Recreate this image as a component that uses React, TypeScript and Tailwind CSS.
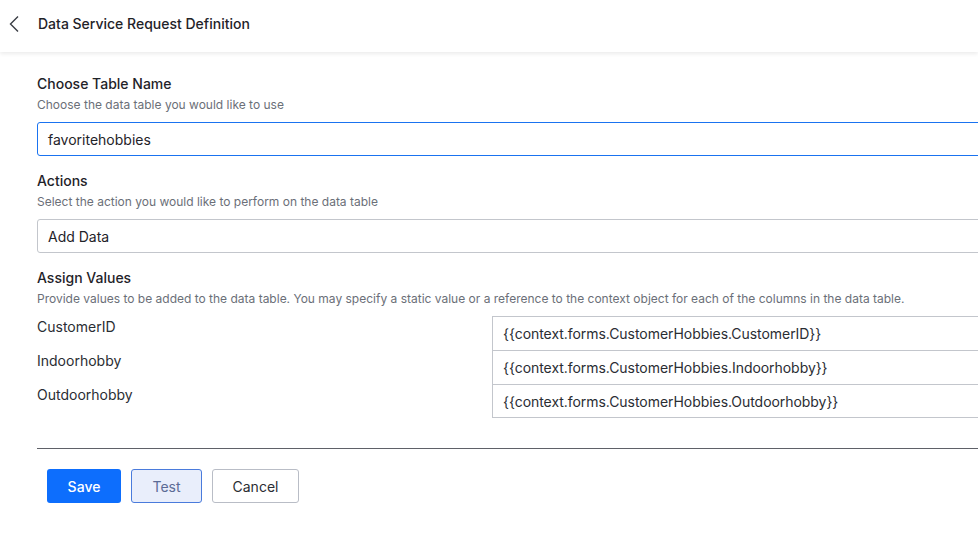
import React from "react";

const rows = [
  { label: "CustomerID", value: "{{context.forms.CustomerHobbies.CustomerID}}" },
  { label: "Indoorhobby", value: "{{context.forms.CustomerHobbies.Indoorhobby}}" },
  { label: "Outdoorhobby", value: "{{context.forms.CustomerHobbies.Outdoorhobby}}" },
];

export default function App() {
  return (
    <div className="min-h-screen w-full overflow-hidden bg-white font-['Inter','Liberation_Sans',sans-serif] text-[#1f2329]">
      <header className="relative z-10 flex h-[52px] items-center bg-white shadow-[0_2px_4px_rgba(0,0,0,0.08)]">
        <svg width="28" height="20" viewBox="0 0 28 20" className="ml-[2px] mt-[-4px]">
          <path d="M16 2.5 L8.5 10 L16 17.5" fill="none" stroke="#3a3d44" strokeWidth="1.4" />
        </svg>
        <h1 className="ml-[8px] mt-[-4px] text-[14px] font-medium leading-5">Data Service Request Definition</h1>
      </header>

      <main className="w-[1200px] pl-[37px] pt-[22px]">
        <section>
          <h2 className="text-[14px] font-medium leading-5">Choose Table Name</h2>
          <p className="mt-[3px] text-[12px] leading-4 text-[#6b6f78]">Choose the data table you would like to use</p>
          <div className="mt-[9px] flex h-[34px] items-center rounded-[3px] border border-[#1a73f0] pl-[10px] text-[14px] text-[#1f2329]">
            favoritehobbies
          </div>
        </section>

        <section className="mt-[15px]">
          <h2 className="text-[14px] font-medium leading-5">Actions</h2>
          <p className="mt-[3px] text-[12px] leading-4 text-[#6b6f78]">Select the action you would like to perform on the data table</p>
          <div className="mt-[9px] flex h-[34px] items-center rounded-[3px] border border-[#c3c6cc] pl-[10px] text-[14px] text-[#1f2329]">
            Add Data
          </div>
        </section>

        <section className="mt-[15px]">
          <h2 className="text-[14px] font-medium leading-5">Assign Values</h2>
          <p className="mt-[3px] text-[12px] leading-4 text-[#6b6f78]">
            Provide values to be added to the data table. You may specify a static value or a reference to the context object for each of the columns in the data table.
          </p>
          <div className="mt-[9px] flex flex-col">
            {rows.map((r, i) => (
              <div key={r.label} className="flex items-start">
                <div className="w-[455px] pt-[1px] text-[14px] leading-5 text-[#2a2d33]">{r.label}</div>
                <div
                  className={
                    "flex h-[34px] flex-1 items-center border-x border-t border-[#c3c6cc] pl-[10px] text-[14px] tracking-[-0.05px] text-[#2a2d33] " +
                    (i === rows.length - 1 ? "border-b" : "")
                  }
                >
                  {r.value}
                </div>
              </div>
            ))}
          </div>
        </section>

        <div className="mt-[30px] h-px bg-[#5f6168]" />

        <div className="ml-[10px] mt-[20px] flex gap-[10px]">
          <button className="h-[34px] w-[74px] rounded-[3px] bg-[#0d6efd] text-[14px] font-medium text-white">Save</button>
          <button className="h-[34px] w-[71px] rounded-[3px] border border-[#4a7bdc] bg-[#e9eefb] text-[14px] text-[#5b6b96]">Test</button>
          <button className="h-[34px] w-[87px] rounded-[3px] border border-[#b9bdc6] bg-white text-[14px] text-[#2a2d33]">Cancel</button>
        </div>
      </main>
    </div>
  );
}
